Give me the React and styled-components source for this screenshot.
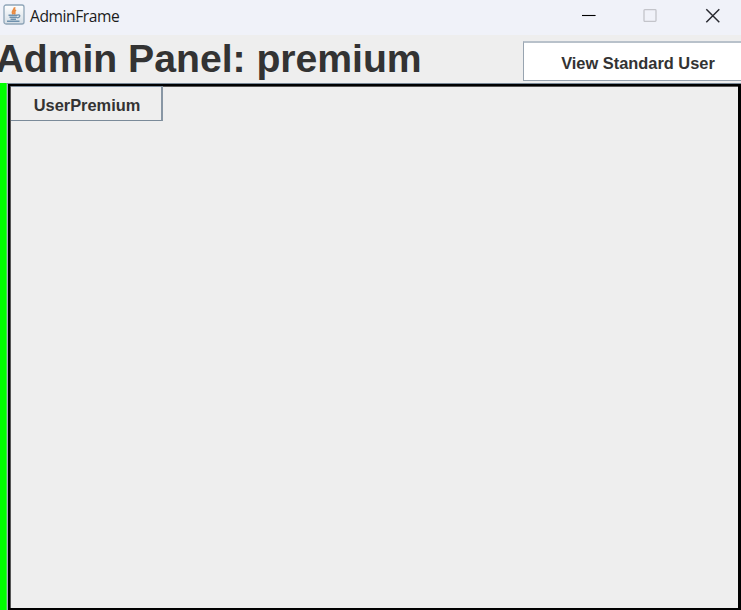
import React from "react";
import styled, { createGlobalStyle } from "styled-components";

const GlobalStyle = createGlobalStyle`
  * { box-sizing: border-box; }
  body { margin: 0; overflow: hidden; background: #eee; }
`;

const Window = styled.div`
  width: 741px;
  height: 610px;
  display: flex;
  flex-direction: column;
  overflow: hidden;
  background: #eee;
  color: #333;
  font-family: "Liberation Sans", Arial, sans-serif;
`;

const TitleBar = styled.header`
  height: 35px;
  flex: none;
  display: flex;
  align-items: flex-start;
  background: #f0f2f9;
`;

const AppIcon = styled.svg`
  margin: 4px 0 0 3px;
  flex: none;
`;

const Caption = styled.span`
  margin-left: 5px;
  font: 15.6px/20px "Open Sans", sans-serif;
  letter-spacing: -0.42px;
  padding-top: 6px;
  color: #1b1b1b;
  white-space: nowrap;
`;

const Controls = styled.div`
  margin: 8px 21px 0 auto;
  display: flex;
  gap: 46px;
`;

const ControlIcon = styled.svg`
  display: block;
  width: 16px;
  height: 16px;
  fill: none;
  stroke: ${(p) => p.$color};
  stroke-width: ${(p) => p.$weight}px;
`;

const Heading = styled.div`
  height: 48px;
  flex: none;
  display: flex;
  justify-content: space-between;
`;

const Title = styled.h1`
  margin: 0 0 0 -4.5px;
  font-size: 39.2px;
  line-height: 48px;
  font-weight: bold;
  letter-spacing: -0.03px;
  white-space: nowrap;
`;

const SwingButton = styled.button`
  flex: none;
  padding: 0;
  border: 1px solid #7a8a99;
  border-radius: 0;
  color: #333;
  font: bold 16.4px/20px "Liberation Sans", Arial, sans-serif;
  white-space: nowrap;
`;

const ViewButton = styled(SwingButton)`
  width: 229px;
  height: 40px;
  margin: 6px -11px 0 0;
  padding: 2px 0 0 1px;
  background: #fff;
  border-color: #98a4b0;
  border-top: 2px solid #b8c1ca;
`;

const UserButton = styled(SwingButton)`
  display: block;
  width: 152px;
  height: 35px;
  padding: 3px 0 0 2px;
  background: #eee;
  border-left: 0;
  border-right: 2px solid #8896a4;
`;

const Body = styled.main`
  flex: 1;
  display: flex;
  border-top: 1px solid #7a8a99;
`;

const GreenStrip = styled.div`
  width: 7px;
  margin-top: -1px;
  background: #0f0;
  border-right: 1px solid #3cf03e;
`;

const Content = styled.section`
  flex: 1;
  margin-left: 1px;
  border: solid #000;
  border-width: 2px 3px 2px 2px;
  box-shadow: inset 1px 1px #555, -1px 0 #a7a5c4;
  padding-left: 1px;
`;

export default function App() {
  return (
    <>
      <GlobalStyle />
      <Window>
        <TitleBar>
          <AppIcon width="22" height="21" viewBox="0 0 22 21">
            <defs>
              <linearGradient id="tile" x2="0" y2="1">
                <stop stopColor="#fff" />
                <stop offset="1" stopColor="#d4dde5" />
              </linearGradient>
            </defs>
            <rect x="1" y="1" width="20" height="19" rx="2" fill="url(#tile)" stroke="#8fa5b8" strokeWidth="1.3" />
            <path d="M11.5 3.3C12.2 6 7.6 7 10.3 10.3M13 6C9.8 7.6 13 8.4 11.2 10.5" fill="none" stroke="#e98b42" strokeWidth="1.9" />
            <path d="M5.5 11.2h9M6.5 13.3h7.4M7.5 15.2h5.5M14.6 11c3.4-.8 2.6 2.8-.8 2.9M4 17.2h12.5" fill="none" stroke="#6f91ae" strokeWidth="1.4" />
          </AppIcon>
          <Caption>AdminFrame</Caption>
          <Controls>
            <ControlIcon viewBox="0 0 16 16" $color="#000" $weight={1.1}>
              <path d="M2 7.5h13.6" />
            </ControlIcon>
            <ControlIcon viewBox="0 0 16 16" $color="#c3c4ca" $weight={1.3}>
              <rect x="2" y="1.7" width="12" height="11.7" rx="0.8" />
            </ControlIcon>
            <ControlIcon viewBox="0 0 16 16" $color="#292a30" $weight={1.5}>
              <path d="M2.3 1.3l13 13M15.3 1.3l-13 13" />
            </ControlIcon>
          </Controls>
        </TitleBar>
        <Heading>
          <Title>Admin Panel: premium</Title>
          <ViewButton>View Standard User</ViewButton>
        </Heading>
        <Body>
          <GreenStrip />
          <Content>
            <UserButton>UserPremium</UserButton>
          </Content>
        </Body>
      </Window>
    </>
  );
}
